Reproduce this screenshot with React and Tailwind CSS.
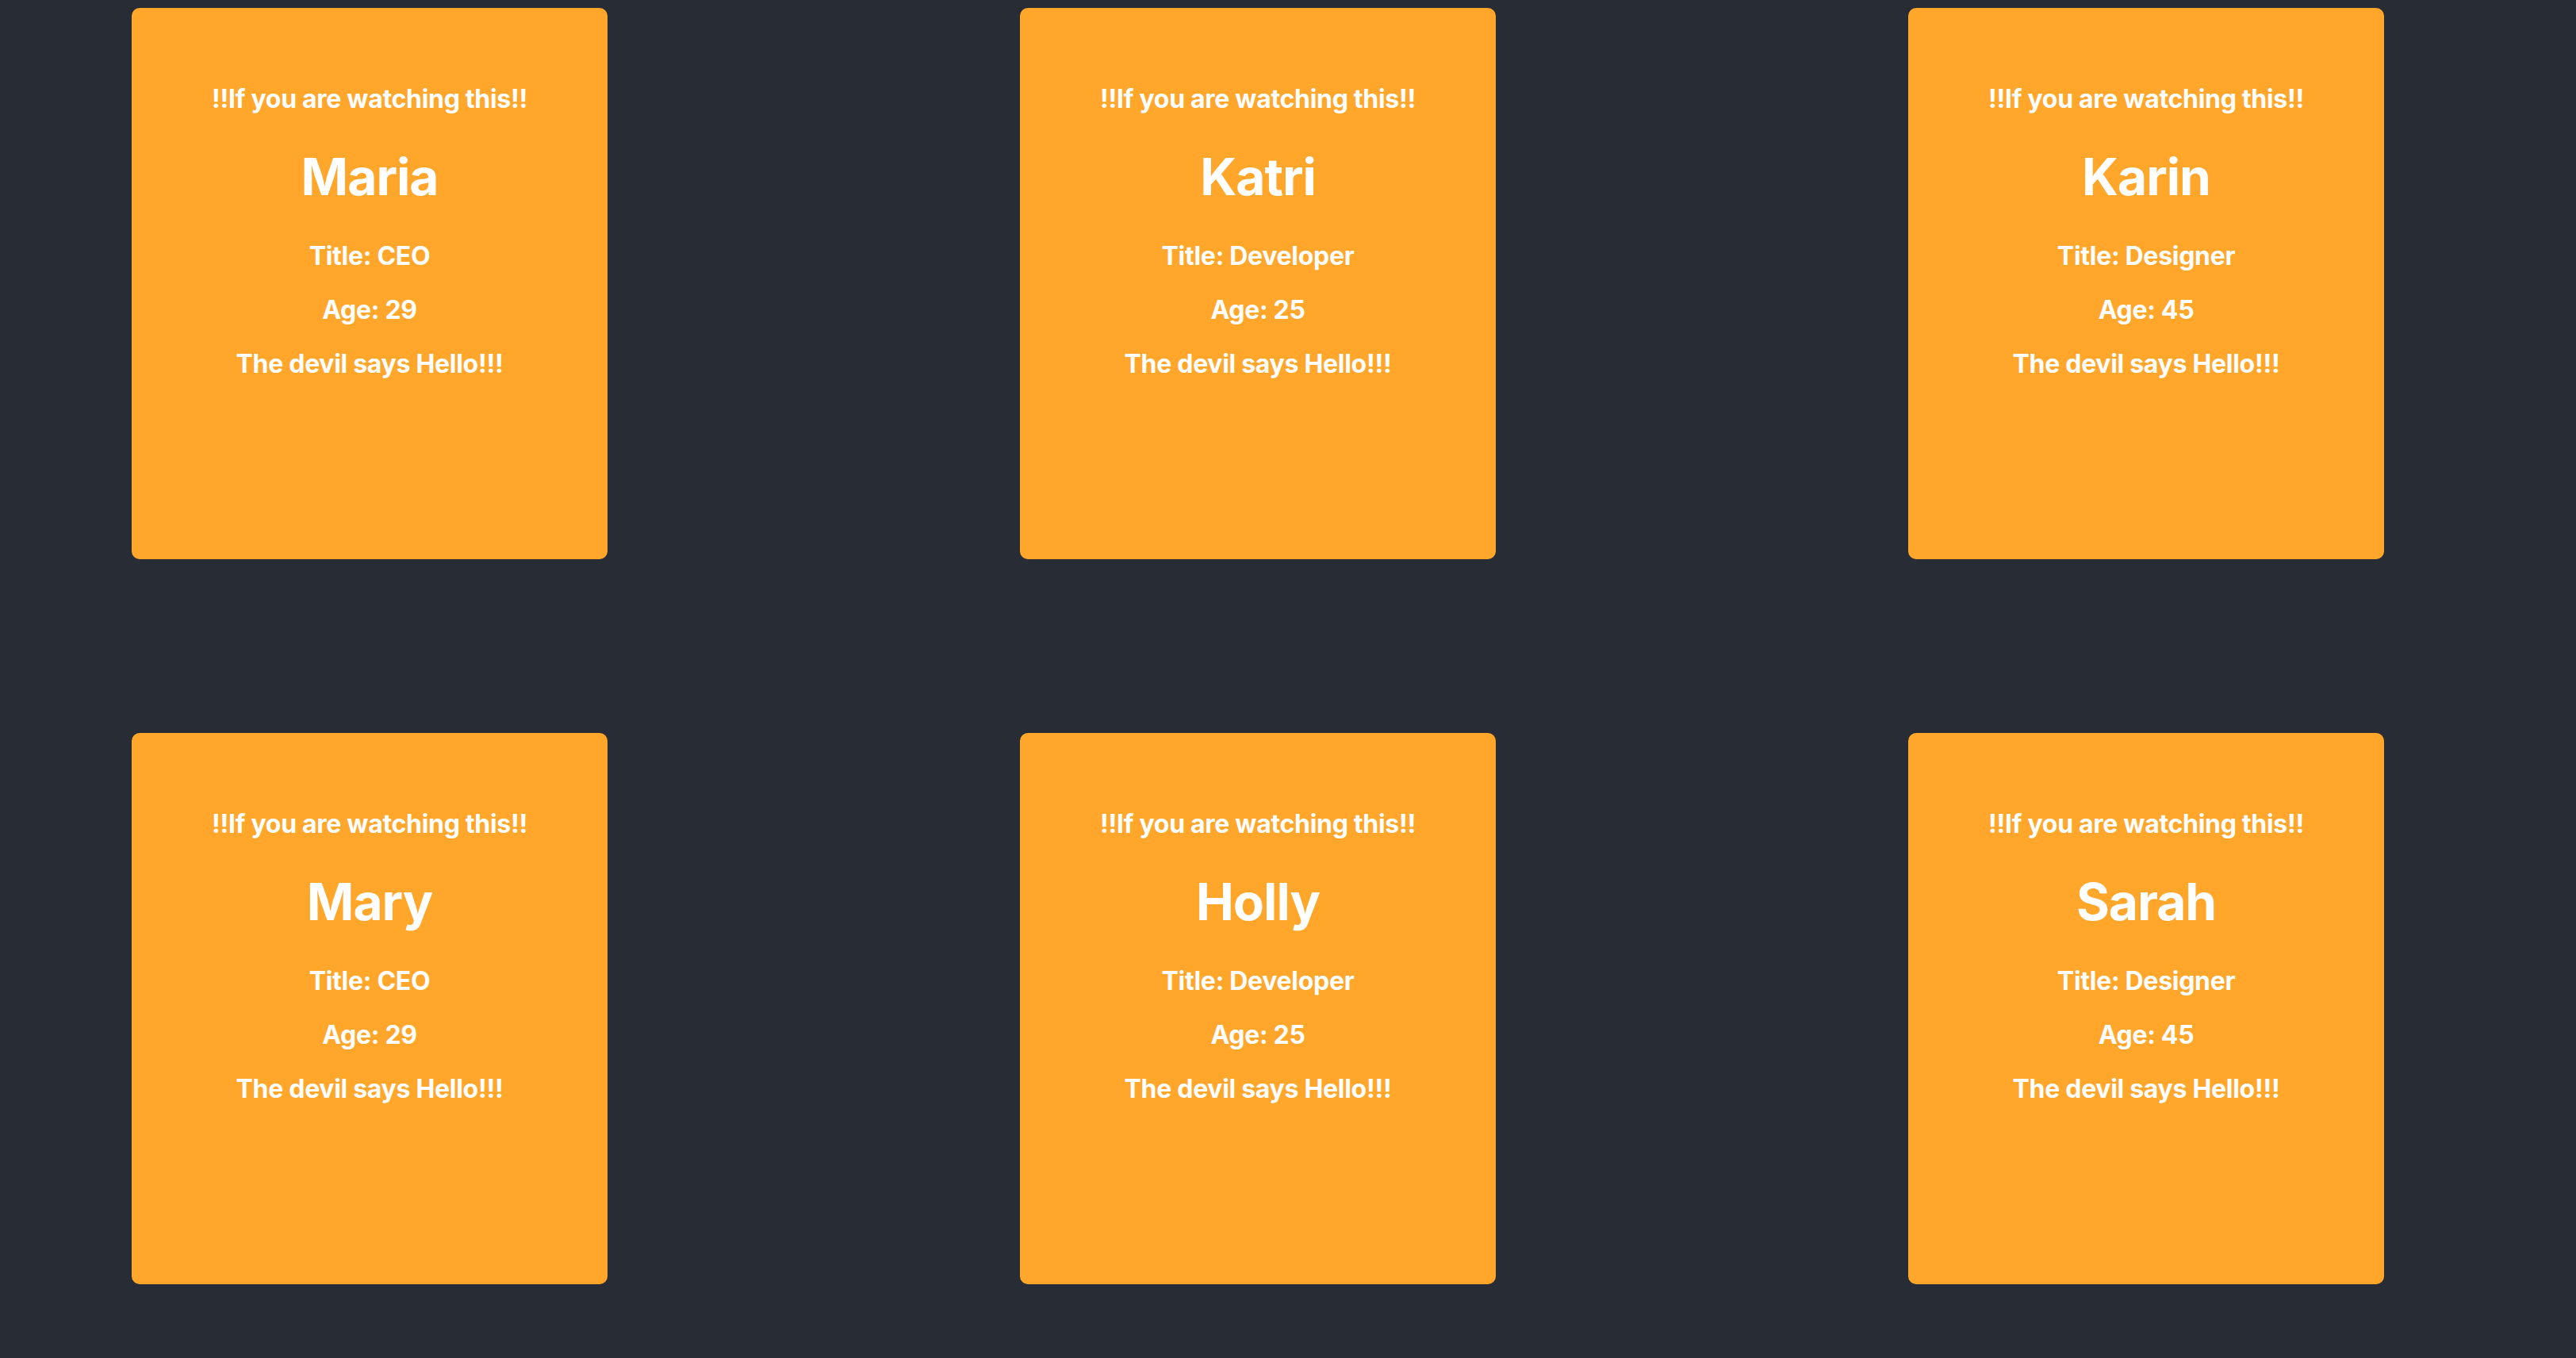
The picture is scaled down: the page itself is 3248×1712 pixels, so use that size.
import React from "react";

const people = [
  { name: "Maria", title: "CEO", age: 29 },
  { name: "Katri", title: "Developer", age: 25 },
  { name: "Karin", title: "Designer", age: 45 },
  { name: "Mary", title: "CEO", age: 29 },
  { name: "Holly", title: "Developer", age: 25 },
  { name: "Sarah", title: "Designer", age: 45 },
];

function Card({ name, title, age }) {
  return (
    <div className="w-[600px] h-[695px] bg-[#ffa62b] rounded-[10px] flex flex-col items-center pt-[96px] text-white font-bold text-center tracking-[-0.3px]">
      <p className="text-[32px] leading-[37px]">!!If you are watching this!!</p>
      <h1 className="mt-[42px] text-[64px] leading-[76px] tracking-[-1px]">{name}</h1>
      <p className="mt-[43px] text-[32px] leading-[37px]">Title: {title}</p>
      <p className="mt-[31px] text-[32px] leading-[37px]">Age: {age}</p>
      <p className="mt-[31px] text-[32px] leading-[37px]">The devil says Hello!!!</p>
    </div>
  );
}

export default function App() {
  return (
    <div
      className="min-h-screen bg-[#282c34] pl-[166px] pt-[10px]"
      style={{ fontFamily: "Inter, 'Noto Sans', sans-serif" }}
    >
      <div className="flex flex-wrap w-[2840px] gap-x-[520px] gap-y-[219px]">
        {people.map((p) => (
          <Card key={p.name} {...p} />
        ))}
      </div>
    </div>
  );
}
